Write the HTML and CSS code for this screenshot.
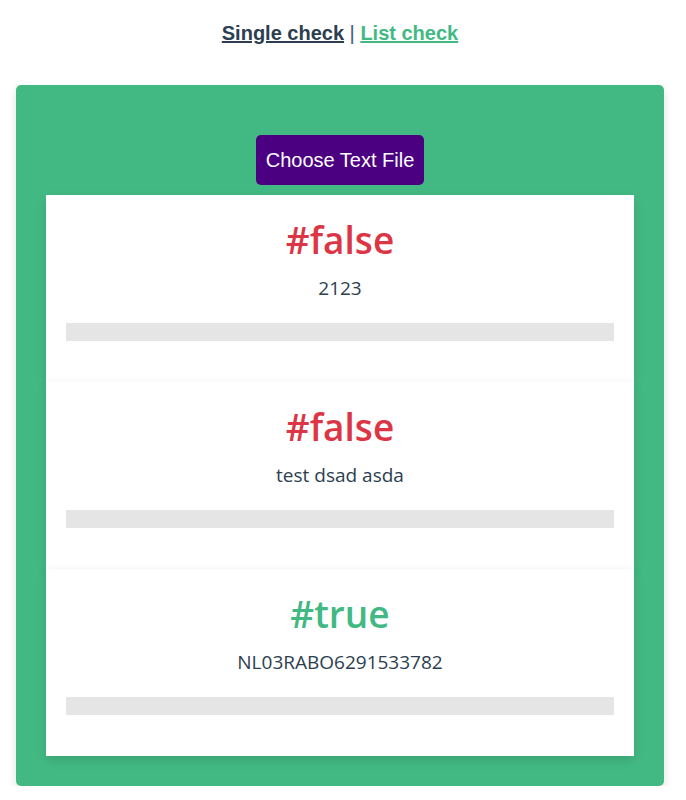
FILE: index.html
```html
<!DOCTYPE html>
<html>
<head>
<meta charset="utf-8">
<link rel="stylesheet" href="styles.css">
</head>
<body>
<div class="app">
  <nav class="nav">
    <a class="link link-active" href="#">Single check</a><span class="sep"> | </span><a class="link link-green" href="#">List check</a>
  </nav>
  <div class="panel">
    <button class="file-btn">Choose Text File</button>
    <div class="cards">
      <div class="card">
        <h1 class="result result-false">#false</h1>
        <p class="value">2123</p>
        <div class="bar"></div>
      </div>
      <div class="card">
        <h1 class="result result-false">#false</h1>
        <p class="value">test dsad asda</p>
        <div class="bar"></div>
      </div>
      <div class="card">
        <h1 class="result result-true">#true</h1>
        <p class="value">NL03RABO6291533782</p>
        <div class="bar"></div>
      </div>
    </div>
  </div>
</div>
</body>
</html>
```

FILE: styles.css
```css
html, body {
  margin: 0;
  padding: 0;
  background: #ffffff;
}
body {
  padding: 0 22px 0 16px;
  font-family: "Open Sans", "Noto Sans", sans-serif;
  color: #2c3e50;
}
.nav {
  padding-top: 21px;
  height: 85px;
  box-sizing: border-box;
  text-align: center;
  font-family: "Liberation Sans", Arial, sans-serif;
  font-weight: bold;
  font-size: 20px;
  line-height: 24px;
  color: #2c3e50;
}
.sep {
  font-weight: normal;
  color: #3a5a7a;
}
.link {
  color: #2c3e50;
  text-decoration: underline;
}
.link-green {
  color: #42b983;
}
.panel {
  background: #42b983;
  border-radius: 5px;
  padding: 50px 30px 30px;
  display: flex;
  flex-direction: column;
  align-items: center;
  box-shadow: 0 4px 10px rgba(0,0,0,0.12);
}
.file-btn {
  height: 50px;
  padding: 0 10px;
  background: #4b0082;
  color: #ffffff;
  border: none;
  border-radius: 5px;
  font-family: "Liberation Sans", Arial, sans-serif;
  font-size: 20px;
  margin-bottom: 10px;
}
.cards {
  align-self: stretch;
  display: flex;
  flex-direction: column;
}
.card {
  background: #ffffff;
  height: 187px;
  box-sizing: border-box;
  padding: 20px 20px 0;
  box-shadow: 0 4px 10px rgba(0,0,0,0.12);
  display: flex;
  flex-direction: column;
  align-items: center;
  position: relative;
}
.result {
  margin: 0;
  font-size: 37px;
  font-weight: 600;
  line-height: 50px;
}
.result-false { color: #dc3545; }
.result-true { color: #42b983; }
.value {
  margin: 9px 0 0;
  font-size: 19px;
  line-height: 28px;
  color: #2c3e50;
}
.bar {
  margin-top: 21px;
  align-self: stretch;
  height: 18px;
  background: #e5e5e5;
}
```
